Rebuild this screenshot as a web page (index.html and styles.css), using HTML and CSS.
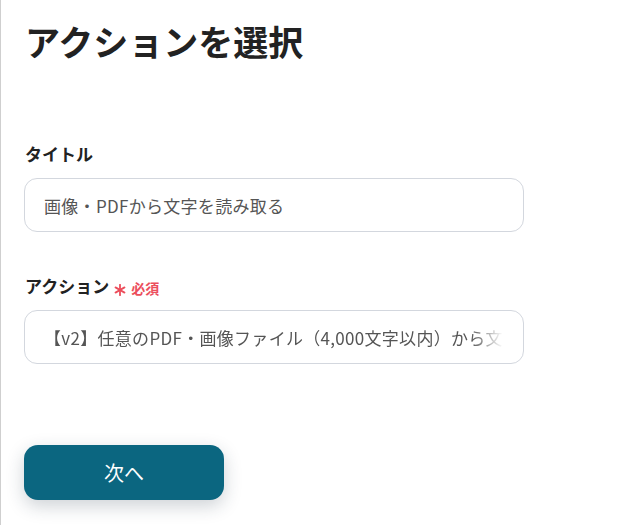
FILE: index.html
```html
<!DOCTYPE html>
<html lang="ja">
<head>
<meta charset="utf-8">
<link rel="stylesheet" href="styles.css">
</head>
<body>
<div class="panel">
  <h1 class="title">アクションを選択</h1>
  <div class="field field-first">
    <div class="label">タイトル</div>
    <div class="input"><span class="value">画像・PDFから文字を読み取る</span></div>
  </div>
  <div class="field">
    <div class="label">アクション<span class="req"><svg class="ast" width="12" height="12" viewBox="0 0 12 12"><g stroke="#ec4e5c" stroke-width="1.8" stroke-linecap="round"><line x1="6" y1="0.8" x2="6" y2="11.2"/><line x1="1.5" y1="3.4" x2="10.5" y2="8.6"/><line x1="1.5" y1="8.6" x2="10.5" y2="3.4"/></g></svg>必須</span></div>
    <div class="input"><span class="value fade">【v2】任意のPDF・画像ファイル（4,000文字以内）から文字を読み取る</span></div>
  </div>
  <div class="actions">
    <button class="btn">次へ</button>
  </div>
</div>
</body>
</html>
```

FILE: styles.css
```css
html, body {
  margin: 0;
  padding: 0;
  background: #fff;
}
body {
  font-family: "Noto Sans CJK JP", "Noto Sans", sans-serif;
  color: #222;
}
.panel {
  border-left: 1px solid #cfcfcf;
  height: 525px;
  box-sizing: border-box;
  padding: 19px 0 0 23px;
}
.title {
  margin: 0 0 0 1px;
  font-size: 35px;
  font-weight: 700;
  line-height: 44px;
  color: #222;
}
.field {
  display: flex;
  flex-direction: column;
  width: 500px;
}
.field-first {
  margin-top: 79px;
}
.field + .field {
  margin-top: 42px;
}
.label {
  font-size: 17px;
  font-weight: 700;
  line-height: 24px;
  margin-left: 1px;
  display: flex;
  align-items: center;
  color: #222;
}
.req {
  color: #ec4e5c;
  font-size: 14px;
  font-weight: 700;
  margin-left: 5px;
  display: inline-flex;
  align-items: center;
  position: relative;
  top: 2px;
}
.ast {
  margin-right: 5px;
  position: relative;
  top: 2px;
}
.input {
  margin-top: 12px;
  height: 54px;
  box-sizing: border-box;
  border: 1px solid #d3d7de;
  border-radius: 13px;
  padding: 0 20px 0 19px;
  display: flex;
  align-items: center;
  overflow: hidden;
}
.value {
  font-size: 17px;
  letter-spacing: 0.3px;
  color: #555;
  white-space: nowrap;
  overflow: hidden;
}
.fade {
  -webkit-mask-image: linear-gradient(to right, #000 93%, transparent 100%);
  mask-image: linear-gradient(to right, #000 93%, transparent 100%);
}
.actions {
  margin-top: 81px;
}
.btn {
  width: 200px;
  height: 55px;
  border: none;
  border-radius: 14px;
  background: #0b6680;
  color: #fff;
  font-family: "Noto Sans CJK JP", "Noto Sans", sans-serif;
  font-size: 20px;
  font-weight: 400;
  box-shadow: 0 6px 18px rgba(30, 50, 70, 0.22);
  cursor: pointer;
}
```
